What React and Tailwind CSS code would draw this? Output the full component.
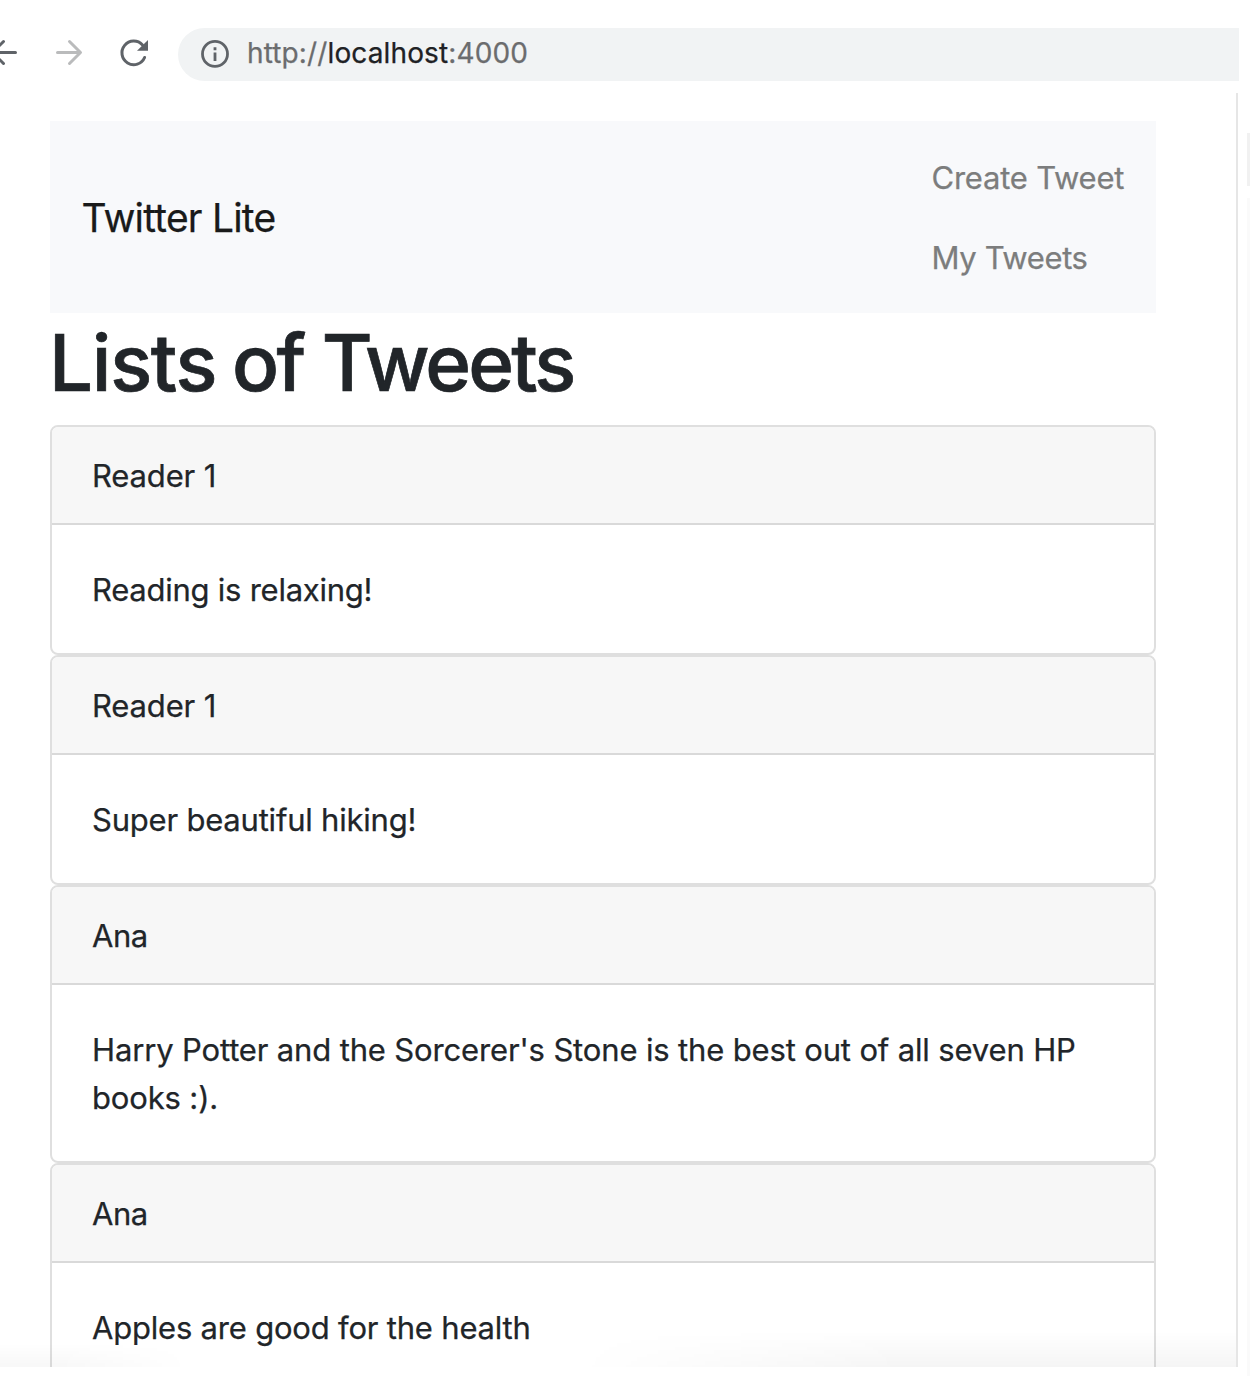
const tweets = [
  { author: "Reader 1", text: "Reading is relaxing!", authorSpacing: "tracking-[-0.15px]", spacing: "tracking-[-0.25px]" },
  { author: "Reader 1", text: "Super beautiful hiking!", authorSpacing: "tracking-[-0.15px]", spacing: "tracking-[-0.21px]" },
  { author: "Ana", text: "Harry Potter and the Sorcerer's Stone is the best out of all seven HP books :).", authorSpacing: "tracking-[-0.5px]", spacing: "tracking-[-0.15px]" },
  { author: "Ana", text: "Apples are good for the health", authorSpacing: "tracking-[-0.5px]", spacing: "tracking-[-0.2px]" },
];

function Toolbar() {
  return (
    <header className="mr-[11px] mt-7 flex h-[53px] shrink-0 items-center">
      <svg className="h-[53px] w-[178px] shrink-0" viewBox="0 0 178 53" fill="none" strokeWidth="3" strokeLinecap="round" strokeLinejoin="round">
        <path d="M-7 24.5H15.5M3.5 13.5L-7.5 24.5L3.5 35.5" stroke="#5f6368" />
        <path d="M57.5 24.5H80M69.5 13.5L80.5 24.5L69.5 35.5" stroke="#babbbc" />
        <path d="M142.5 17A11.8 11.8 0 1 0 144.6 29.5" stroke="#5f6368" />
        <path d="M148 12V22.8H137Z" fill="#5f6368" />
      </svg>
      <div className="flex h-full flex-1 items-center rounded-l-full bg-[#f1f3f4] pb-[2px] pl-[23px]">
        <svg className="size-7 text-[#5f6368]" viewBox="0 0 28 28" fill="none" stroke="currentColor" strokeWidth="2.8">
          <circle cx="14" cy="13.9" r="12.5" />
          <path d="M14 12.4V20.9M14 7.2V10.2" />
        </svg>
        <p className="ml-[18px] whitespace-nowrap pb-px text-[28px] leading-none tracking-[0.13px] text-[#6b6c6e]">
          http://<span className="text-[#202124]">localhost</span>:4000
        </p>
      </div>
    </header>
  );
}

export default function App() {
  return (
    <div className="flex h-[1376px] w-[1250px] flex-col overflow-hidden bg-white font-['Inter',sans-serif] text-[#212529] antialiased [-webkit-text-stroke-width:0.25px]">
      <Toolbar />
      <div className="mt-3 flex flex-1">
        <div className="relative h-[1274px] w-[1238px] overflow-hidden border-r-2 border-[#e6e6e6]">
          <main className="ml-[50px] mt-7 w-[1106px]">
            <nav className="flex h-48 items-center justify-between bg-[#f8f9fb] pl-[31.5px] pr-[32.5px] pt-[2px]">
              <a className="text-[39px] tracking-[-0.78px] text-[#191a1a]">Twitter Lite</a>
              <div className="w-48 text-[31px] text-[#7c7d7d]">
                <a className="block h-20 whitespace-nowrap leading-[80px] tracking-[-0.22px]">Create Tweet</a>
                <a className="block h-20 whitespace-nowrap leading-[80px] tracking-[-0.38px]">My Tweets</a>
              </div>
            </nav>
            <h1 className="-ml-px mb-4 h-24 pt-[2px] text-[78px] font-medium leading-[96px] tracking-[-2.6px] [-webkit-text-stroke-width:0.7px]">
              <span className="tracking-[-1.3px]">Lists</span>
              <span className="tracking-[-4.9px]"> </span>
              of <span className="tracking-[-2.9px]">Tweets</span>
            </h1>
            {tweets.map((tweet, index) => (
              <article key={index} className="overflow-hidden rounded-lg border-2 border-[#dfdfdf] bg-white text-[31px] leading-[48px]">
                <h2 className={"border-b-2 border-[#d9d9d9] bg-[#f7f7f7] px-10 pb-[23px] pt-[25px] " + tweet.authorSpacing}>{tweet.author}</h2>
                <p className={"px-10 pb-[39px] pt-[41px] " + tweet.spacing}>{tweet.text}</p>
              </article>
            ))}
          </main>
          <div className="absolute bottom-0 left-0 h-6 w-[190px] bg-linear-to-t from-black/3 to-transparent mask-r-from-30%" />
          <div className="absolute bottom-0 right-0 h-9 w-[660px] bg-linear-to-t from-black/4 to-transparent mask-l-from-50%" />
        </div>
        <aside className="ml-auto flex w-[3px] flex-col pt-10">
          <div className="h-[53px] bg-[#f1f1f1]" />
          <div className="mt-3 flex-1 bg-[#fafafa]" />
        </aside>
      </div>
    </div>
  );
}
